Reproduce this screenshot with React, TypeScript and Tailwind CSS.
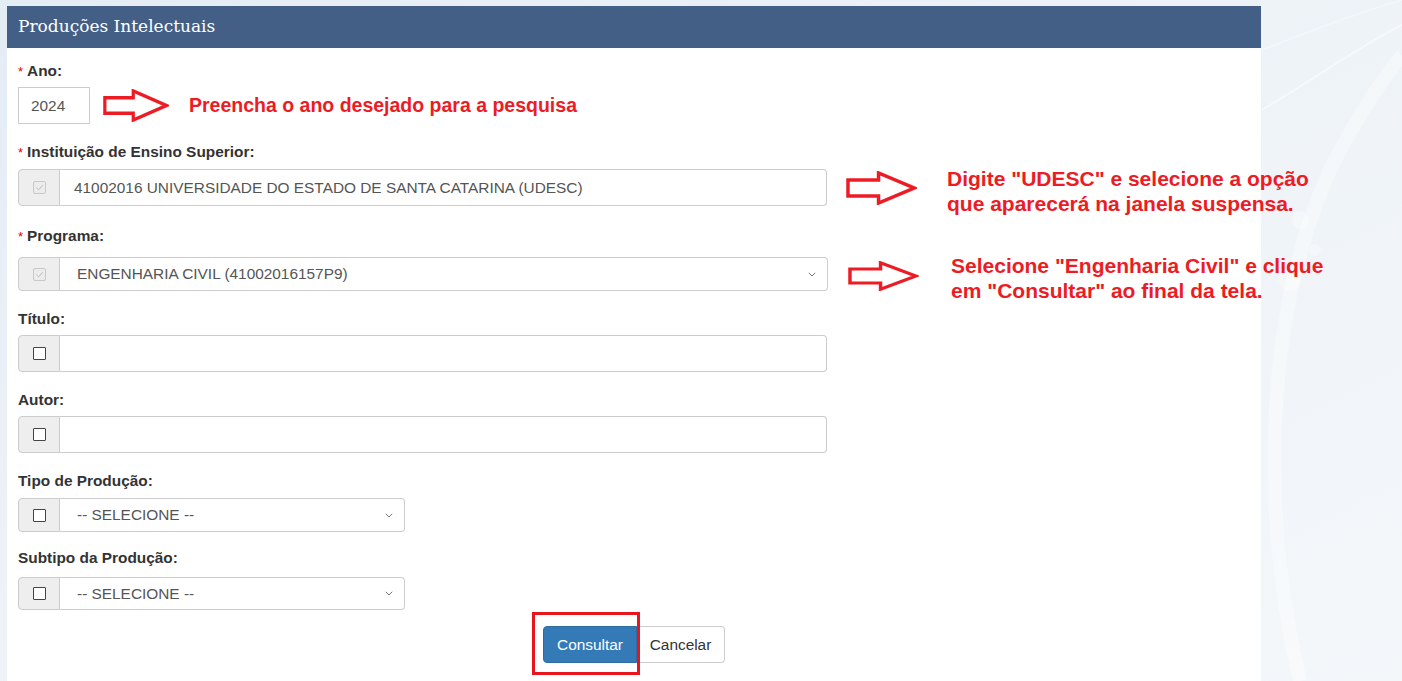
import React from 'react';

const sans = { fontFamily: '"Liberation Sans", Arial, sans-serif' };

function Arrow({ w = 72, h = 34 }: { w?: number; h?: number }) {
  return (
    <svg width={w} height={h} viewBox="0 0 72 34" preserveAspectRatio="none" className="shrink-0">
      <path d="M2 9 H33 V2 L69 17 L33 32 V25 H2 Z" fill="none" stroke="#ed1c24" strokeWidth="3.5" strokeLinejoin="miter" />
    </svg>
  );
}

function Box({ checked = false }: { checked?: boolean }) {
  if (checked) {
    return (
      <span className="flex h-[13px] w-[13px] items-center justify-center rounded-[2px] border border-[#c9c9c9] bg-[#ececec]">
        <svg width="9" height="9" viewBox="0 0 10 10">
          <path d="M1.5 5.2 L4 7.6 L8.6 2.6" fill="none" stroke="#b9b9b9" strokeWidth="1.1" />
        </svg>
      </span>
    );
  }
  return <span className="h-[13px] w-[13px] rounded-[1px] border border-[#444] bg-white" />;
}

function Chevron() {
  return (
    <svg width="8" height="5" viewBox="0 0 8 5" className="shrink-0">
      <path d="M0.8 0.8 L4 4 L7.2 0.8" fill="none" stroke="#777" strokeWidth="1" />
    </svg>
  );
}

function Label({ text, required = false, className = '' }: { text: string; required?: boolean; className?: string }) {
  return (
    <div className={`h-5 text-[15.4px] font-bold leading-5 text-[#333] ${className}`}>
      {required && <span className="mr-[4px] text-[13px] font-normal text-[#e00]">*</span>}
      {text}
    </div>
  );
}

function Group({
  checked = false,
  select = false,
  value = '',
  width = 'w-[809px]',
  height = 'h-[37px]',
  className = '',
}: {
  checked?: boolean;
  select?: boolean;
  value?: string;
  width?: string;
  height?: string;
  className?: string;
}) {
  return (
    <div className={`flex shrink-0 ${width} ${height} ${className}`}>
      <span className="flex w-[42px] shrink-0 items-center justify-center rounded-l-[4px] border border-[#ccc] bg-[#eee]">
        <Box checked={checked} />
      </span>
      <div
        className={`flex flex-1 items-center justify-between rounded-r-[4px] border border-l-0 border-[#ccc] bg-white text-[15.4px] text-[#555] ${
          select ? 'pl-[17px] pr-[11px]' : 'px-[14px]'
        }`}
      >
        <span>{value}</span>
        {select && <Chevron />}
      </div>
    </div>
  );
}

function Note({ lines, className = '' }: { lines: string[]; className?: string }) {
  return (
    <div className={`shrink-0 whitespace-nowrap font-bold leading-[25px] text-[#ed1c24] ${className}`}>
      {lines.map((l) => (
        <div key={l}>{l}</div>
      ))}
    </div>
  );
}

export default function App() {
  return (
    <div
      className="relative min-h-[681px] w-full overflow-hidden bg-gradient-to-br from-[#e4ecf4] via-[#eef3f8] to-[#f4f7fa]"
      style={sans}
    >
      {/* background swooshes */}
      <svg className="absolute inset-0 h-full w-full" viewBox="0 0 1402 681" preserveAspectRatio="none">
        <path d="M1262 110 C1320 75 1370 40 1402 25" stroke="#ffffff" strokeOpacity="0.5" strokeWidth="2" fill="none" />
        <path d="M1262 50 C1300 35 1350 15 1402 0" stroke="#ffffff" strokeOpacity="0.4" strokeWidth="1.5" fill="none" />
        <path d="M1300 681 C1262 520 1262 320 1330 170 C1360 110 1390 70 1402 55" stroke="#ffffff" strokeOpacity="0.35" strokeWidth="14" fill="none" />
        <circle cx="1300" cy="220" r="9" fill="#ffffff" fillOpacity="0.35" />
        <circle cx="1315" cy="250" r="6" fill="#ffffff" fillOpacity="0.35" />
        <circle cx="1290" cy="280" r="11" fill="#ffffff" fillOpacity="0.3" />
      </svg>

      <div className="relative ml-[7px] mt-[6px] min-h-[675px] w-[1254px] bg-white">
        <div className="flex h-[42px] items-center bg-[#445f86] px-[11px] text-[17px] text-white" style={{ fontFamily: '"DejaVu Serif", serif' }}>
          Produções Intelectuais
        </div>

        <div className="px-[11px] pt-[13px]">
          {/* Ano */}
          <Label text="Ano:" required />
          <div className="mt-[6px] flex h-[37px] items-center">
            <div className="flex h-[37px] w-[72px] items-center border border-[#ccc] px-[12px] text-[15.4px] text-[#555]">2024</div>
            <div className="ml-[13px]">
              <Arrow w={66} h={33} />
            </div>
            <Note lines={['Preencha o ano desejado para a pesquisa']} className="ml-[20px] text-[19.5px]" />
          </div>

          {/* Instituicao */}
          <Label text="Instituição de Ensino Superior:" required className="mt-[18px]" />
          <div className="mt-[7px] flex h-[37px] items-center">
            <Group checked value="41002016 UNIVERSIDADE DO ESTADO DE SANTA CATARINA (UDESC)" />
            <div className="ml-[19px]">
              <Arrow w={71} h={34} />
            </div>
            <Note
              lines={['Digite "UDESC" e selecione a opção', 'que aparecerá na janela suspensa.']}
              className="ml-[30px] mt-[6px] text-[21px]"
            />
          </div>

          {/* Programa */}
          <Label text="Programa:" required className="mt-[20px]" />
          <div className="mt-[11px] flex h-[34px] items-center">
            <Group checked select value="ENGENHARIA CIVIL (41002016157P9)" width="w-[810px]" height="h-[34px]" />
            <div className="ml-[20px] mt-[4px]">
              <Arrow w={71} h={30} />
            </div>
            <Note
              lines={['Selecione "Engenharia Civil" e clique', 'em "Consultar" ao final da tela.']}
              className="ml-[32px] mt-[7px] text-[21px]"
            />
          </div>

          {/* Titulo */}
          <Label text="Título:" className="mt-[18px]" />
          <Group className="mt-[6px]" />

          {/* Autor */}
          <Label text="Autor:" className="mt-[18px]" />
          <Group className="mt-[6px]" />

          {/* Tipo */}
          <Label text="Tipo de Produção:" className="mt-[18px]" />
          <Group select value="-- SELECIONE --" width="w-[387px]" height="h-[34px]" className="mt-[7px]" />

          {/* Subtipo */}
          <Label text="Subtipo da Produção:" className="mt-[16px]" />
          <Group select value="-- SELECIONE --" width="w-[387px]" height="h-[33px]" className="mt-[9px]" />
        </div>

        <div className="mt-[16px] flex justify-center">
          <div className="relative">
            <button className="h-[37px] w-[94px] rounded-l-[4px] border border-[#2e6da4] bg-[#337ab7] text-[15.4px] text-white">
              Consultar
            </button>
            <span className="absolute left-[-11px] top-[-14px] h-[63px] w-[108px] border-[3px] border-[#e8151d]" />
          </div>
          <button className="h-[37px] w-[88px] rounded-r-[4px] border border-l-0 border-[#ccc] bg-white text-[15.4px] text-[#333]">
            Cancelar
          </button>
        </div>
      </div>
    </div>
  );
}
